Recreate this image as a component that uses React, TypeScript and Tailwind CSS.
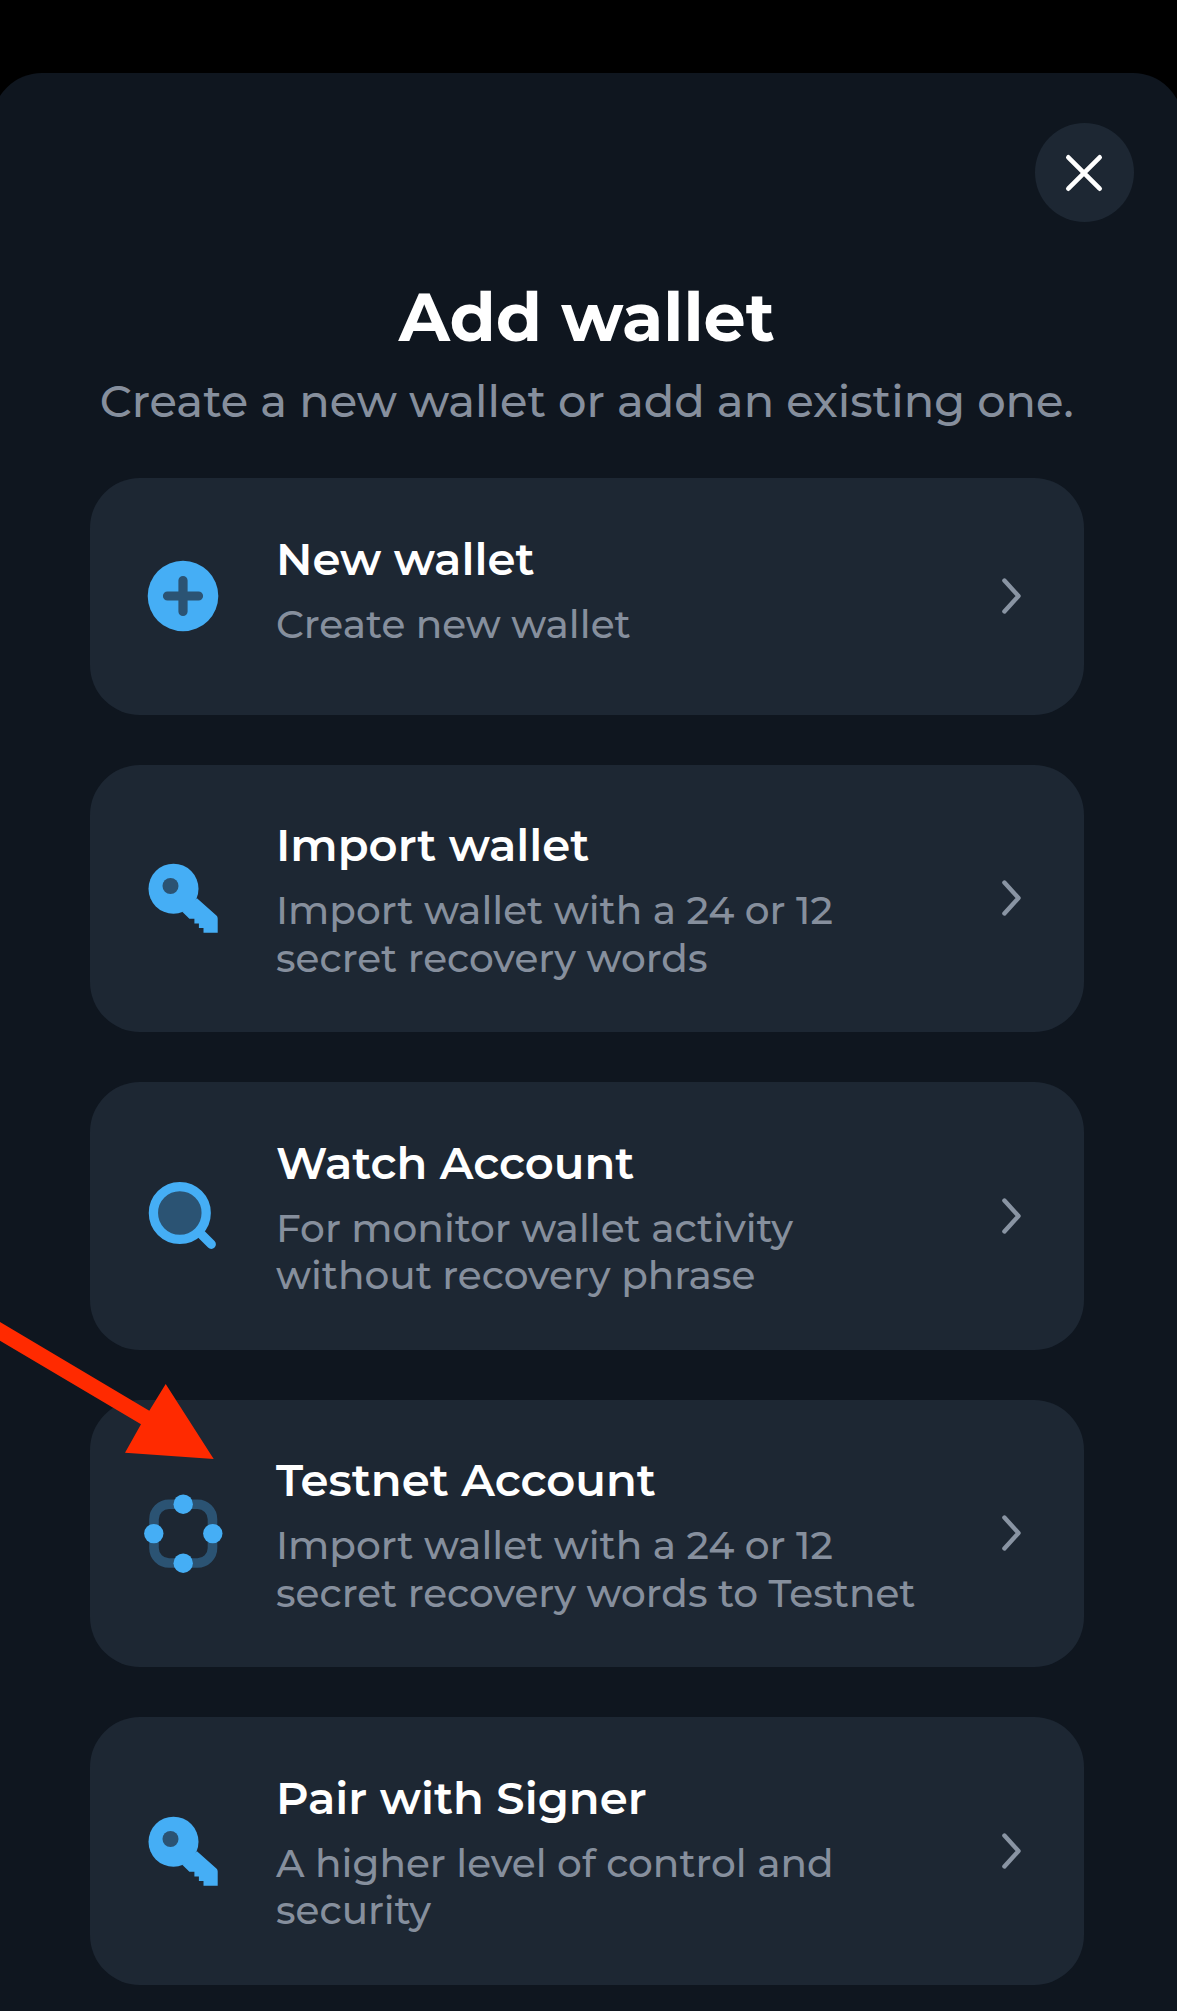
import type { ReactNode } from "react";

const BLUE = "#45aef5";
const DIM = "#2b5373";

function PlusIcon() {
  return (
    <svg viewBox="0 0 80 80" className="size-20 shrink-0" fill="none">
      <circle cx="40" cy="40" r="35.3" fill={BLUE} />
      <path d="M24.5 40H55.5M40 24.5V55.5" stroke={DIM} strokeWidth="9.2" strokeLinecap="round" />
    </svg>
  );
}

function KeyIcon() {
  return (
    <svg viewBox="0 0 80 80" className="size-20 shrink-0" fill="none">
      <circle cx="30.5" cy="30.7" r="25" fill={BLUE} />
      <path
        d="M54 40.2L73.4 57.6Q74.7 58.8 74.7 60.6V74.7H60.5V70H55.9V65.4H51.4V60.7H46.4L39.5 54Z"
        fill={BLUE}
      />
      <circle cx="27.5" cy="28" r="8" fill={DIM} />
    </svg>
  );
}

function SearchIcon() {
  return (
    <svg viewBox="0 0 80 80" className="size-20 shrink-0" fill="none">
      <path d="M57 57L68.3 68.3" stroke={BLUE} strokeWidth="9.2" strokeLinecap="round" />
      <circle cx="36.8" cy="37" r="26.4" fill={DIM} stroke={BLUE} strokeWidth="9.3" />
    </svg>
  );
}

function TestnetIcon() {
  return (
    <svg viewBox="0 0 80 80" className="size-20 shrink-0" fill="none">
      <rect x="11" y="11.2" width="58.5" height="58.8" rx="15" stroke={DIM} strokeWidth="9.6" />
      <g fill={BLUE}>
        <circle cx="40.2" cy="11.2" r="9.7" />
        <circle cx="10.8" cy="40.6" r="9.7" />
        <circle cx="69.8" cy="40.6" r="9.7" />
        <circle cx="40.2" cy="70.2" r="9.7" />
      </g>
    </svg>
  );
}

function Chevron() {
  return (
    <svg viewBox="0 0 24 40" className="h-10 w-6 shrink-0" fill="none">
      <path d="M5.4 4.6L19.5 20L5.4 35.4" stroke="#8994a3" strokeWidth="4.4" strokeLinecap="round" strokeLinejoin="round" />
    </svg>
  );
}

type Option = { icon: ReactNode; title: string; lines: string[]; height: string };

const OPTIONS: Option[] = [
  {
    icon: <PlusIcon />,
    title: "New wallet",
    lines: ["Create new wallet"],
    height: "h-[236.5px]",
  },
  {
    icon: <KeyIcon />,
    title: "Import wallet",
    lines: ["Import wallet with a 24 or 12", "secret recovery words"],
    height: "h-[267.5px]",
  },
  {
    icon: <SearchIcon />,
    title: "Watch Account",
    lines: ["For monitor wallet activity", "without recovery phrase"],
    height: "h-[267.5px]",
  },
  {
    icon: <TestnetIcon />,
    title: "Testnet Account",
    lines: ["Import wallet with a 24 or 12", "secret recovery words to Testnet"],
    height: "h-[267.5px]",
  },
  {
    icon: <KeyIcon />,
    title: "Pair with Signer",
    lines: ["A higher level of control and", "security"],
    height: "h-[267.5px]",
  },
];

function OptionCard({ icon, title, lines, height }: Option) {
  return (
    <button
      type="button"
      className={`flex w-full items-center rounded-[50px] bg-[#1d2733] pr-[61px] pl-[53px] text-left ${height}`}
    >
      {icon}
      <div className="ml-[53.5px] flex-1 self-start pt-[52.5px]">
        <h2 className="text-[45px] leading-[56px] font-semibold whitespace-nowrap text-white">{title}</h2>
        <div className="mt-[14px] text-[39px] leading-[47.5px] font-medium whitespace-nowrap text-[#868f9d]">
          {lines.map((line) => (
            <p key={line}>{line}</p>
          ))}
        </div>
      </div>
      <Chevron />
    </button>
  );
}

export default function App() {
  return (
    <div className="relative h-[2011px] w-[1177px] overflow-hidden bg-black pt-[73px] font-['Montserrat','Inter',sans-serif]">
      <main className="-mr-1.5 -ml-2 flex h-full flex-col rounded-t-[50px] bg-[#0f161f] pr-[99px] pl-[97.5px]">
        <div className="-mr-[49.5px] flex justify-end pt-[50px]">
          <button
            type="button"
            aria-label="Close"
            className="flex size-[99px] items-center justify-center rounded-full bg-[#1d2733]"
          >
            <svg viewBox="0 0 40 40" className="size-10" fill="none">
              <path d="M4.3 4.3L35.7 35.7M35.7 4.3L4.3 35.7" stroke="#fff" strokeWidth="4.6" strokeLinecap="round" />
            </svg>
          </button>
        </div>

        <header className="mt-[55px] flex flex-col items-center">
          <h1 className="text-[66.8px] leading-[80px] font-bold whitespace-nowrap text-white">Add wallet</h1>
          <p className="mt-[15.5px] text-[44.8px] leading-[56px] font-medium whitespace-nowrap text-[#868f9d]">
            Create a new wallet or add an existing one.
          </p>
        </header>

        <section className="mt-[49.5px] flex flex-col gap-[50px]">
          {OPTIONS.map((option) => (
            <OptionCard key={option.title} {...option} />
          ))}
        </section>
      </main>

      <svg viewBox="0 0 214 140" className="absolute top-[1320px] left-0 h-[140px] w-[214px]">
        <path d="M0 2L149.3 90.7L165.7 64L213.7 139L125 132.7L141 104.3L0 20.7Z" fill="#ff2a00" />
      </svg>
    </div>
  );
}
